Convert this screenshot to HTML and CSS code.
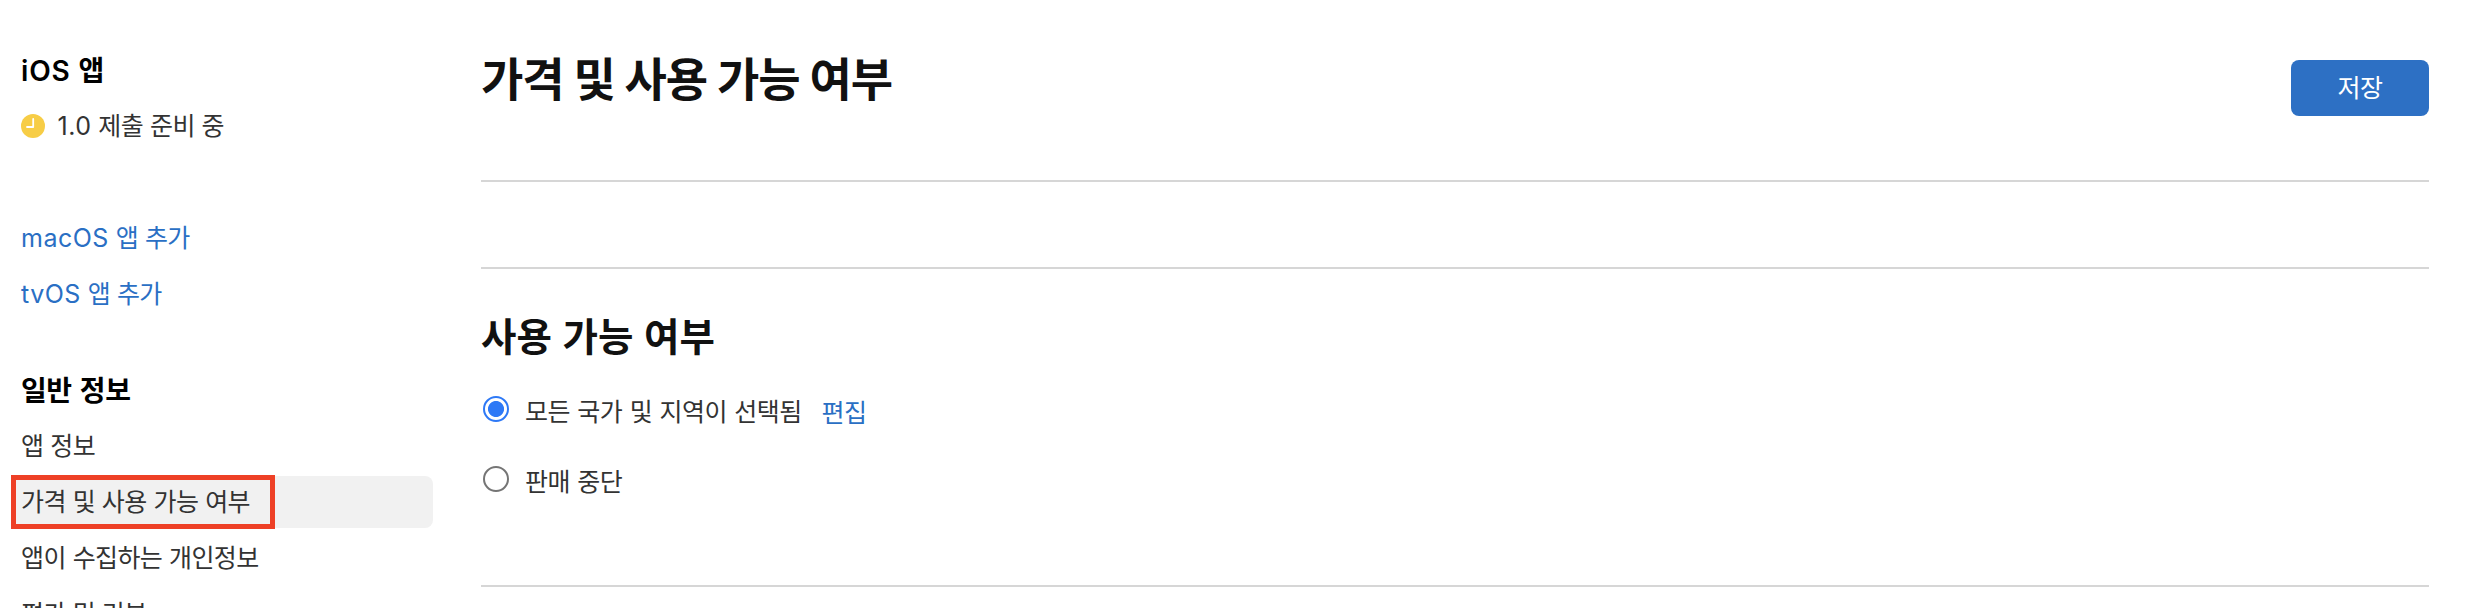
FILE: index.html
```html
<!DOCTYPE html>
<html lang="ko">
<head>
<meta charset="utf-8">
<title>가격 및 사용 가능 여부</title>
<link rel="stylesheet" href="styles.css">
</head>
<body>
<div class="page">
  <nav class="sidebar">
    <h3 class="nav-heading"><span class="latin">iOS</span> 앱</h3>
    <a class="nav-item nav-status">
      <svg class="clock" viewBox="0 0 24 24"><circle cx="12" cy="12" r="12" fill="#f7cd46"/><path d="M12.2 5v8H6" fill="none" stroke="#fff" stroke-width="1.8" stroke-linecap="round" stroke-linejoin="round"/></svg>
      <span><span class="latin">1.0</span> 제출 준비 중</span>
    </a>
    <div class="nav-group platforms">
      <a class="nav-item link"><span class="latin">macOS</span> 앱 추가</a>
      <a class="nav-item link"><span class="latin">tvOS</span> 앱 추가</a>
    </div>
    <div class="nav-group general">
      <h3 class="nav-heading">일반 정보</h3>
      <a class="nav-item">앱 정보</a>
      <a class="nav-item active">가격 및 사용 가능 여부<span class="highlight"></span></a>
      <a class="nav-item">앱이 수집하는 개인정보</a>
      <a class="nav-item">평가 및 리뷰</a>
    </div>
  </nav>
  <main class="content">
    <header class="page-header">
      <h1 class="title">가격 및 사용 가능 여부</h1>
      <button class="save">저장</button>
    </header>
    <div class="spacer"></div>
    <section class="availability">
      <h2 class="section-title">사용 가능 여부</h2>
      <div class="option">
        <span class="radio checked"></span><span class="option-label">모든 국가 및 지역이 선택됨</span><a class="link edit">편집</a>
      </div>
      <div class="option">
        <span class="radio"></span><span class="option-label">판매 중단</span>
      </div>
    </section>
  </main>
</div>
</body>
</html>
```
FILE: styles.css
```css
* { box-sizing: border-box; }
body {
  margin: 0;
  height: 608px;
  overflow: hidden;
  background: #fff;
  color: #333;
  font: 25px/52px Inter, "Noto Sans CJK KR", sans-serif;
  letter-spacing: -0.6px;
  word-spacing: 0.4px;
}
h1, h2, h3 { margin: 0; }
.page { display: flex; height: 608px; overflow: hidden; }
.sidebar { display: flex; flex-direction: column; gap: 4px; width: 433px; padding: 44px 0 0 11px; flex: none; }
.nav-group { display: flex; flex-direction: column; gap: 4px; }
.platforms { margin-top: 56px; }
.general { margin-top: 40px; }
.nav-heading { height: 52px; padding-left: 10px; color: #000; font-size: 28px; line-height: 54px; font-weight: 600; letter-spacing: -0.4px; word-spacing: 1.4px; }
.nav-item { display: block; position: relative; height: 52px; flex: none; padding-left: 10px; border-radius: 8px; white-space: nowrap; }
.nav-status { display: flex; align-items: center; gap: 12.5px; }
.latin { letter-spacing: 0.5px; }
.nav-heading .latin { letter-spacing: 0.8px; }
.clock { width: 24px; height: 24px; }
.link { color: #2a6fc4; }
.active { background: #f1f1f1; }
.highlight { position: absolute; left: -0.5px; top: -1px; width: 264.5px; height: 54px; border: 5px solid #ee4026; }
.content { width: 1948px; margin-left: 48px; flex: none; }
.page-header { display: flex; justify-content: space-between; align-items: flex-start; height: 182px; border-bottom: 2px solid #d6d6d6; }
.title { margin-top: 44px; color: #111; font-size: 46px; line-height: 70px; font-weight: 600; letter-spacing: -1px; word-spacing: -0.8px; }
.save { width: 138px; height: 56px; margin-top: 60px; padding: 0; border: 0; border-radius: 8px; background: #2d70c4; color: #fff; font: inherit; letter-spacing: inherit; }
.spacer { height: 87px; border-bottom: 2px solid #d6d6d6; }
.availability { height: 318px; padding-top: 41px; border-bottom: 2px solid #d6d6d6; }
.section-title { color: #111; font-size: 38.5px; line-height: 54px; font-weight: 600; letter-spacing: 0; word-spacing: 1px; }
.option { display: flex; align-items: center; height: 70px; padding-left: 2px; }
.section-title + .option { margin-top: 10px; }
.radio { display: block; width: 26px; height: 26px; border: 2px solid #757575; border-radius: 50%; }
.radio.checked { border-color: #2e79f6; background: radial-gradient(circle, #2e79f6 7.6px, transparent 8.4px); }
.option-label { margin-left: 16px; padding-top: 5px; word-spacing: 1.1px; }
.edit { margin-left: 20px; padding-top: 7px; }
```
